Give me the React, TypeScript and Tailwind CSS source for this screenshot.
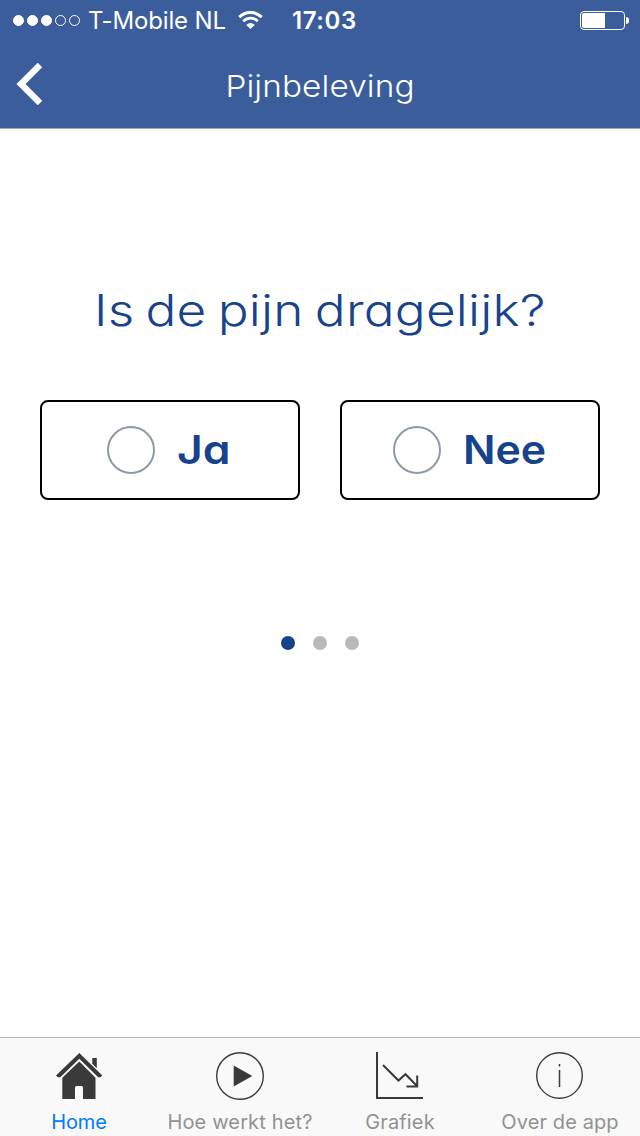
import { useState } from 'react';
import type { ReactNode } from 'react';
import { clsx } from 'clsx';

const tabs: { label: string; className: string; icon: ReactNode }[] = [
  {
    label: 'Home',
    className: 'tracking-[-0.1px]',
    icon: (
      <svg width="48" height="48" viewBox="0 0 48 48" fill="#3a3a3a">
        <path d="M0 23.5 23.3 1l23 22.5-1.9 1.7h-2.2L23.3 6.7 4.3 25.2H1.8z" />
        <path d="M36.3 6h4.5v10.2l-4.5-4.4z" />
        <path d="M23.3 9.5 39.5 25.7V47H27V35.5q0-1.5-1.5-1.5h-5q-1.5 0-1.5 1.5V47H6.3V25.7z" />
      </svg>
    ),
  },
  {
    label: 'Hoe werkt het?',
    className: 'tracking-[0.15px]',
    icon: (
      <svg width="48" height="48" viewBox="0 0 48 48">
        <circle cx="24" cy="24" r="23.3" fill="none" stroke="#3a3a3a" strokeWidth="1.4" />
        <path d="M17.7 13.5v21L36.3 24z" fill="#3a3a3a" />
      </svg>
    ),
  },
  {
    label: 'Grafiek',
    className: 'tracking-[0.15px]',
    icon: (
      <svg width="48" height="48" viewBox="0 0 48 48" fill="none" stroke="#3a3a3a">
        <path d="M1 0v46h46" strokeWidth="2" />
        <path d="m7 13 15.5 15.5 7-6.3L41 34M30.5 34.5H41.2V23.5" strokeWidth="2" />
      </svg>
    ),
  },
  {
    label: 'Over de app',
    className: 'tracking-[0.1px]',
    icon: (
      <svg width="48" height="48" viewBox="0 0 48 48" fill="none" stroke="#3a3a3a">
        <circle cx="23.5" cy="23.5" r="22.8" strokeWidth="1.4" />
        <path d="M23.5 12v2.5M23.5 18v17" strokeWidth="1.5" />
      </svg>
    ),
  },
];

const StatusBar = () => (
  <div className="flex h-10 items-center pl-[13px] pr-[11px] text-white">
    <div className="flex gap-[3px]">
      {[true, true, true, false, false].map((filled, index) => (
        <span
          key={index}
          className={clsx('size-[11px] rounded-full border border-white', filled && 'bg-white')}
        />
      ))}
    </div>
    <span className="ml-2 w-[138px] whitespace-nowrap pt-0.5 text-2xl tracking-[-0.15px]">T-Mobile NL</span>
    <svg className="ml-3" width="25" height="18" viewBox="0 0 25 18" fill="none" stroke="white">
      <path d="M1.2 6.2Q6.5 1.4 12.5 1.4T23.8 6.2" strokeWidth="3" />
      <path d="M5.2 10.2q3.3-3 7.3-3t7.3 3" strokeWidth="2.8" />
      <path d="M8.2 14q4.3-4 8.6 0l-4.3 4z" fill="white" stroke="none" />
    </svg>
    <span className="ml-[29px] whitespace-nowrap pt-0.5 text-2xl font-semibold tracking-[0.6px]">17:03</span>
    <div className="ml-auto flex items-center">
      <div className="h-[19px] w-[45px] rounded-[4px] border border-white p-px">
        <div className="h-full w-[23px] rounded-l-[2px] bg-white" />
      </div>
      <span className="ml-px h-[7px] w-[3px] rounded-r-full bg-white" />
    </div>
  </div>
);

const App = () => {
  const [answer, setAnswer] = useState<string | null>(null);

  return (
    <div className="flex h-[1136px] w-[640px] flex-col overflow-hidden bg-white font-['Inter',sans-serif]">
      <header className="h-[129px] border-b border-[#a9a9ab] bg-[#3b5d9c]">
        <StatusBar />
        <div className="grid h-[88px] grid-cols-[64px_1fr_64px] items-center">
          <button aria-label="Terug" className="pl-[15px]">
            <svg width="28" height="42" viewBox="0 0 28 42" fill="none" stroke="white" strokeWidth="6.4">
              <path d="M25 2 6 21l19 19" />
            </svg>
          </button>
          <h1 className="scale-x-[1.11] pt-1 text-center text-[30px] font-[350] tracking-[0.1px] text-white [font-feature-settings:'cv11']">
            Pijnbeleving
          </h1>
        </div>
      </header>

      <main className="flex flex-1 flex-col items-center px-10 pt-[151px] text-[#17438c] [font-feature-settings:'cv11']">
        <h2 className="h-[60px] scale-x-[1.165] whitespace-nowrap text-[44px] leading-[60px] font-[350] tracking-[0.2px] [word-spacing:-3px]">
          Is de pijn dragelijk?
        </h2>

        <div className="mt-[60px] grid w-full grid-cols-2 gap-10">
          {['Ja', 'Nee'].map(option => (
            <button
              key={option}
              onClick={() => setAnswer(option)}
              className="flex h-[100px] items-center justify-center gap-[22px] rounded-lg border-2 border-black"
            >
              <span
                className={clsx(
                  'size-12 rounded-full border-2 border-[#8e99a8]',
                  answer === option && 'bg-[#17438c]'
                )}
              />
              <span
                className={clsx(
                  'origin-left text-left text-[40px] leading-none font-semibold',
                  option === 'Ja' ? 'w-[56px] scale-x-[1.11]' : 'w-[84px] scale-x-[1.07]'
                )}
              >
                {option}
              </span>
            </button>
          ))}
        </div>

        <div className="mt-[136px] flex gap-[18px]">
          <span className="size-3.5 rounded-full bg-[#17438c]" />
          <span className="size-3.5 rounded-full bg-[#b8b8b8]" />
          <span className="size-3.5 rounded-full bg-[#b8b8b8]" />
        </div>
      </main>

      <nav className="grid h-[99px] grid-cols-4 border-t border-[#b2b2b2] bg-[#f9f9f9]">
        {tabs.map((tab, index) => (
          <button key={tab.label} className="flex flex-col items-center pt-3.5">
            {tab.icon}
            <span
              className={clsx(
                'mt-2 whitespace-nowrap text-xl leading-7',
                tab.className,
                index === 0 ? '-ml-0.5 text-[#007aff]' : 'text-[#929292]'
              )}
            >
              {tab.label}
            </span>
          </button>
        ))}
      </nav>
    </div>
  );
};

export default App;
